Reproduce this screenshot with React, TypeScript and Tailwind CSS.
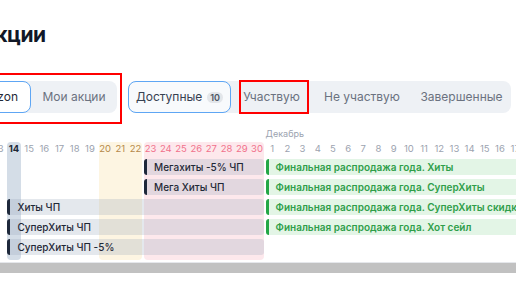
import React from "react";

type Day = { d: number; kind: "n" | "today" | "y" | "p" };

const days: Day[] = [
  { d: 13, kind: "n" },
  { d: 14, kind: "today" },
  ...[15, 16, 17, 18, 19].map((d) => ({ d, kind: "n" as const })),
  ...[20, 21, 22].map((d) => ({ d, kind: "y" as const })),
  ...[23, 24, 25, 26, 27, 28, 29, 30].map((d) => ({ d, kind: "p" as const })),
  ...Array.from({ length: 17 }, (_, i) => ({ d: i + 1, kind: "n" as const })),
];

type Bar = { row: number; from: number; to: number; label: string; green?: boolean };

const bars: Bar[] = [
  { row: 2, from: 11, to: 19, label: "Мегахиты -5% ЧП" },
  { row: 2, from: 19, to: 36, label: "Финальная распродажа года. Хиты", green: true },
  { row: 3, from: 11, to: 19, label: "Мега Хиты ЧП" },
  { row: 3, from: 19, to: 36, label: "Финальная распродажа года. СуперХиты", green: true },
  { row: 4, from: 2, to: 19, label: "Хиты ЧП" },
  { row: 4, from: 19, to: 36, label: "Финальная распродажа года. СуперХиты скидка на комиссию", green: true },
  { row: 5, from: 2, to: 19, label: "СуперХиты ЧП" },
  { row: 5, from: 19, to: 36, label: "Финальная распродажа года. Хот сейл", green: true },
  { row: 6, from: 2, to: 19, label: "СуперХиты ЧП -5%" },
];

const numColor: Record<Day["kind"], string> = {
  n: "text-[#9ca3af] font-normal",
  today: "text-[#1f2937] font-bold",
  y: "text-[#b5894a] font-normal",
  p: "text-[#f1718b] font-normal",
};

export default function App() {
  return (
    <div className="relative w-[516px] h-[290px] overflow-hidden bg-white font-['Inter',sans-serif]">
      <div className="pt-[21px] ml-[-20px]">
        <h1 className="text-[21px] leading-7 font-bold tracking-[-0.02em] text-[#111827]">Акции</h1>
      </div>

      <div className="mt-[32px] flex h-8 text-[12px]">
        <div className="ml-[-31px] flex rounded-lg bg-[#eef1f5]">
          <div className="w-[62px] flex items-center justify-end pr-[12px] rounded-lg border border-[#5ea6f4] bg-white text-[#1f2937]">
            Ozon
          </div>
          <div className="w-[86px] flex items-center justify-center text-[#6b7280]">Мои акции</div>
        </div>
        <div className="ml-[11px] flex rounded-lg bg-[#eef1f5]">
          <div className="w-[103px] flex items-center justify-center gap-[5px] rounded-lg border border-[#5ea6f4] bg-[#f8fafc] text-[#374151]">
            <span>Доступные</span>
            <span className="rounded-full bg-[#e3e6ea] px-[3px] text-[9px] leading-[11px] font-semibold text-[#4b5563]">10</span>
          </div>
          <div className="w-[81px] flex items-center justify-center text-[#6b7280]">Участвую</div>
          <div className="w-[100px] flex items-center justify-center text-[#6b7280]">Не участвую</div>
          <div className="w-[99px] flex items-center justify-center text-[#6b7280]">Завершенные</div>
        </div>
      </div>

      <div className="ml-[-8.8px] mt-[13px]">
        <div className="grid grid-cols-[repeat(35,15.2px)] h-[16px]">
          <div className="col-start-19 col-span-10 pl-[1px] text-[9px] leading-[16px] text-[#9ca3af]">Декабрь</div>
        </div>
        <div className="grid grid-cols-[repeat(35,15.2px)] grid-rows-[13px_repeat(5,16px)_1px] gap-y-[4px]">
          <div className="col-start-2 col-span-1 row-start-1 row-end-8 mx-[1px] rounded-[4px] bg-[#d4dde7]" />
          <div className="col-start-8 col-span-3 row-start-1 row-end-8 mx-[1px] rounded-[4px] bg-[#fdf5e2]" />
          <div className="col-start-11 col-span-8 row-start-1 row-end-8 mx-[1px] rounded-[4px] bg-[#fde8ec]" />
          {days.map((day, i) => (
            <div
              key={i}
              style={{ gridColumn: `${i + 1} / ${i + 2}`, gridRow: "1 / 2" }}
              className={`z-10 flex items-center justify-center text-[9.5px] leading-[13px] ${numColor[day.kind]}`}
            >
              {day.d}
            </div>
          ))}
          {bars.map((b, i) => (
            <div
              key={i}
              style={{ gridColumn: `${b.from} / ${b.to}`, gridRow: `${b.row} / ${b.row + 1}` }}
              className={
                b.green
                  ? "z-10 mx-[1px] flex items-center overflow-hidden whitespace-nowrap rounded-[3px] border-l-[3px] border-[#22a746] bg-[#e3f5e6] pl-[7px] text-[10px] font-semibold text-[#2f9e4a]"
                  : "z-10 mx-[1px] flex items-center overflow-hidden whitespace-nowrap rounded-[3px] border-l-[3px] border-[#1e293b] bg-[rgba(148,163,184,0.25)] pl-[7px] text-[10px] font-medium text-[#1f2937]"
              }
            >
              {b.label}
            </div>
          ))}
        </div>
      </div>

      <div className="mt-[2px] h-[11px] border-t border-[#e5e7eb] bg-[#c1c1c1]" />

      <div className="absolute left-[-4px] top-[73px] w-[126px] h-[51px] border-2 border-[#ff0000]" />
      <div className="absolute left-[239px] top-[80px] w-[70px] h-[34px] border-2 border-[#ff0000]" />
    </div>
  );
}
